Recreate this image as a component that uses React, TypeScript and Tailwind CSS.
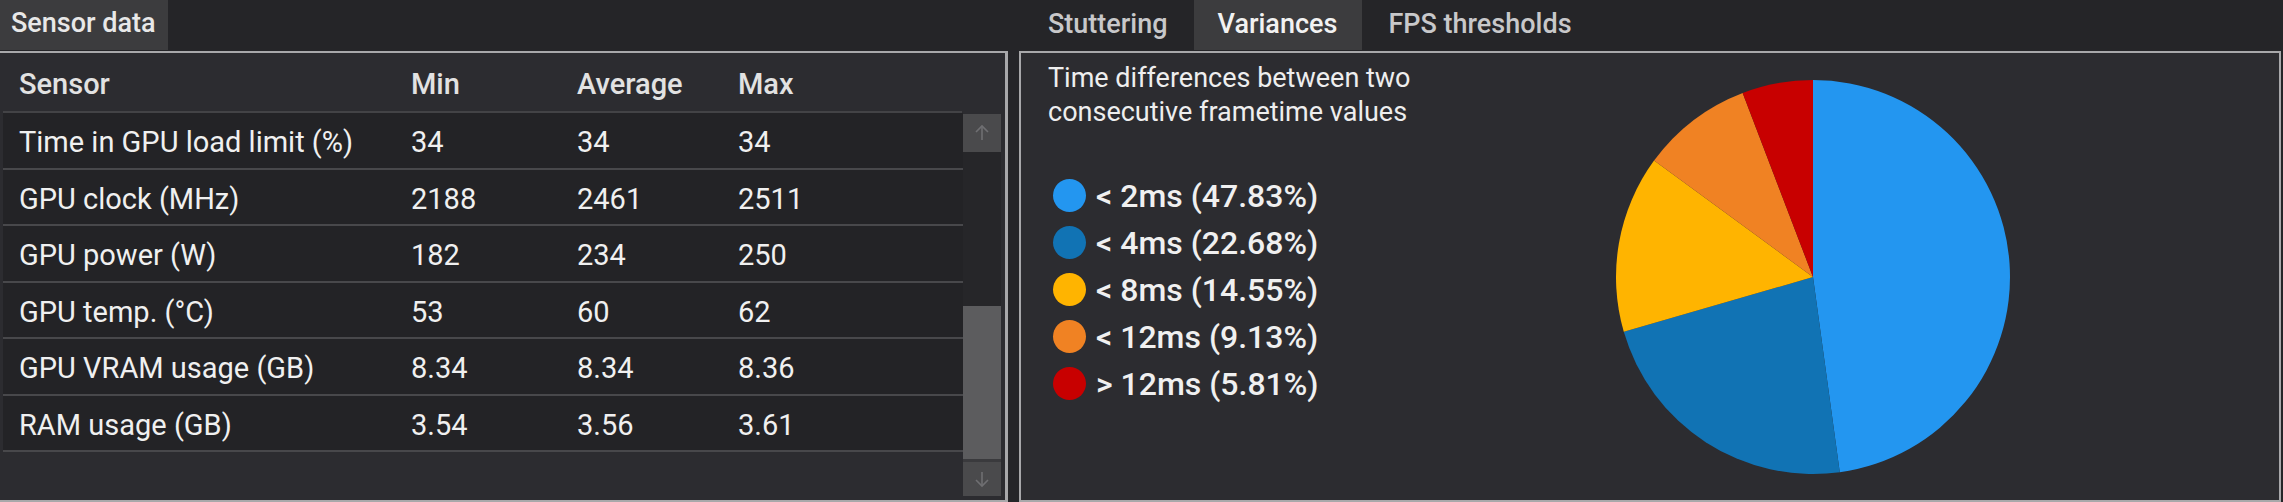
import React from "react";

const rows = [
  ["Time in GPU load limit (%)", "34", "34", "34"],
  ["GPU clock (MHz)", "2188", "2461", "2511"],
  ["GPU power (W)", "182", "234", "250"],
  ["GPU temp. (°C)", "53", "60", "62"],
  ["GPU VRAM usage (GB)", "8.34", "8.34", "8.36"],
  ["RAM usage (GB)", "3.54", "3.56", "3.61"],
];

const slices = [
  { label: "< 2ms (47.83%)", v: 47.83, c: "#2396f0" },
  { label: "< 4ms (22.68%)", v: 22.68, c: "#1173b4" },
  { label: "< 8ms (14.55%)", v: 14.55, c: "#ffb400" },
  { label: "< 12ms (9.13%)", v: 9.13, c: "#f08223" },
  { label: "> 12ms (5.81%)", v: 5.81, c: "#c80000" },
];

function Pie() {
  const cx = 200, cy = 200, r = 197;
  let acc = 0;
  const total = slices.reduce((s, x) => s + x.v, 0);
  return (
    <svg width="400" height="400" viewBox="0 0 400 400">
      {slices.map((s, i) => {
        const a0 = (acc / total) * Math.PI * 2;
        acc += s.v;
        const a1 = (acc / total) * Math.PI * 2;
        const x0 = cx + r * Math.sin(a0), y0 = cy - r * Math.cos(a0);
        const x1 = cx + r * Math.sin(a1), y1 = cy - r * Math.cos(a1);
        const large = a1 - a0 > Math.PI ? 1 : 0;
        return (
          <path
            key={i}
            d={`M${cx},${cy} L${x0},${y0} A${r},${r} 0 ${large} 1 ${x1},${y1} Z`}
            fill={s.c}
          />
        );
      })}
    </svg>
  );
}

function Arrow({ down }: { down?: boolean }) {
  return (
    <svg width="20" height="20" viewBox="0 0 20 20" fill="none" stroke="#6f6f72" strokeWidth="1.6">
      {down ? (
        <>
          <path d="M10 3 V17" />
          <path d="M4 11 L10 17 L16 11" />
        </>
      ) : (
        <>
          <path d="M10 3 V17" />
          <path d="M4 9 L10 3 L16 9" />
        </>
      )}
    </svg>
  );
}

export default function App() {
  return (
    <div
      className="w-[2283px] h-[502px] bg-[#252528] flex overflow-hidden text-[#eeeeee]"
      style={{ fontFamily: "Roboto, 'Liberation Sans', sans-serif" }}
    >
      {/* Left column */}
      <div className="w-[1008px] flex flex-col">
        <div className="h-[51px] flex">
          <div className="h-[50px] w-[168px] bg-[#3c3c3e] flex items-center pb-[3px] pl-[11px] text-[27px] font-medium text-[#e8e8e8]">
            Sensor data
          </div>
        </div>
        <div className="flex-1 bg-[#2c2c30] border-t-2 border-r-[3px] border-b-2 border-[#a8a8aa] pl-[3px] flex flex-col">
          <div className="h-[60px] mr-[43px] pt-[5px] border-b-2 border-[#434346] grid grid-cols-[392px_166px_161px_1fr] items-center pl-[16px] text-[29px] font-medium text-[#e2e2e2]">
            <div>Sensor</div>
            <div>Min</div>
            <div>Average</div>
            <div>Max</div>
          </div>
          <div className="flex flex-1">
            <div className="flex-1 flex flex-col">
              {rows.map((r, i) => (
                <div
                  key={i}
                  className="h-[56.5px] pt-[5px] bg-[#232326] border-b-2 border-[#48484b] grid grid-cols-[392px_166px_161px_1fr] items-center pl-[16px] text-[29px] text-[#f0f0f0]"
                >
                  <div>{r[0]}</div>
                  <div>{r[1]}</div>
                  <div>{r[2]}</div>
                  <div>{r[3]}</div>
                </div>
              ))}
            </div>
            <div className="w-[38px] mr-[4px] mt-[1px] flex flex-col">
              <div className="h-[38px] bg-[#4a4a4c] flex items-center justify-center">
                <Arrow />
              </div>
              <div className="h-[154px] bg-[#262629]" />
              <div className="h-[153px] bg-[#5c5c5e]" />
              <div className="h-[3px] bg-[#3a3a3d]" />
              <div className="h-[34px] bg-[#4a4a4c] flex items-center justify-center">
                <Arrow down />
              </div>
            </div>
          </div>
        </div>
      </div>
      <div className="w-[11px]" />
      {/* Right column */}
      <div className="flex-1 flex flex-col">
        <div className="h-[51px] flex pl-[3px] text-[27px] font-medium">
          <div className="h-[50px] pl-[26px] pr-[26px] pb-[2px] flex items-center text-[#c8c8ca]">Stuttering</div>
          <div className="h-[50px] pl-[24px] pr-[25px] pb-[2px] flex items-center bg-[#3c3c3e] text-[#f2f2f2]">Variances</div>
          <div className="h-[50px] pl-[26px] pb-[2px] flex items-center text-[#c8c8ca]">FPS thresholds</div>
        </div>
        <div className="flex-1 bg-[#2c2c30] border-2 border-[#a8a8aa] mr-[2px] flex">
          <div className="w-[560px] pl-[27px] pt-[8px] flex flex-col">
            <div className="text-[27px] leading-[34px] text-[#eeeeee]">
              Time differences between two
              <br />
              consecutive frametime values
            </div>
            <div className="mt-[43px] flex flex-col pl-[5px]">
              {slices.map((s, i) => (
                <div key={i} className="h-[47px] flex items-center">
                  <div className="w-[33px] h-[33px] rounded-full" style={{ backgroundColor: s.c }} />
                  <div className="ml-[10px] text-[32px] font-medium text-[#f0f0f0]">{s.label}</div>
                </div>
              ))}
            </div>
          </div>
          <div className="pl-[32px] pt-[24px]">
            <Pie />
          </div>
        </div>
      </div>
    </div>
  );
}
